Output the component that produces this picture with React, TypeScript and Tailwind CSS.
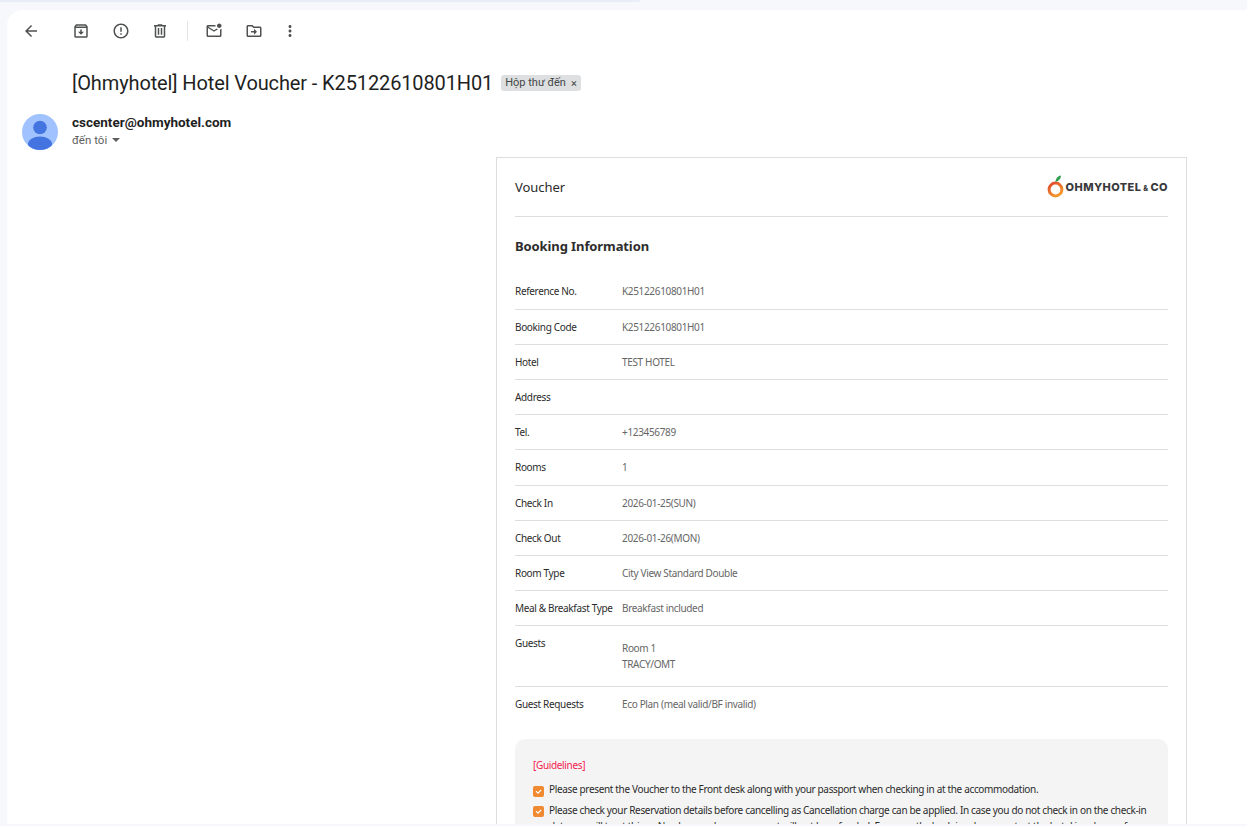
import React from "react";

const ui = "font-['Roboto','Liberation_Sans',sans-serif]";
const body = "font-['Noto_Sans','Open_Sans',sans-serif]";

function Ico({ d, x = 0, s = 18 }: { d: string; x?: number; s?: number }) {
  return (
    <svg width={s} height={s} viewBox="0 0 24 24" fill="#4f5250" className="block" style={x ? { marginLeft: x } : undefined}>
      <path d={d} />
    </svg>
  );
}

const rows: [string, string, string][] = [
  ["Reference No.", "K25122610801H01", "h-[36px]"],
  ["Booking Code", "K25122610801H01", "h-[35px]"],
  ["Hotel", "TEST HOTEL", "h-[35px]"],
  ["Address", "", "h-[35px]"],
  ["Tel.", "+123456789", "h-[35px]"],
  ["Rooms", "1", "h-[36px]"],
  ["Check In", "2026-01-25(SUN)", "h-[35px]"],
  ["Check Out", "2026-01-26(MON)", "h-[35px]"],
  ["Room Type", "City View Standard Double", "h-[35px]"],
  ["Meal & Breakfast Type", "Breakfast included", "h-[35px]"],
];

function Check({ first }: { first?: boolean }) {
  return (
    <span className={`${first ? "mt-[5px]" : "mt-[4px]"} mr-[5px] flex h-[11px] w-[11px] shrink-0 items-center justify-center rounded-[2px] bg-[#f0892f]`}>
      <svg width="9" height="9" viewBox="0 0 10 10" fill="none" stroke="#fff" strokeWidth="1.3">
        <path d="M2.2 4.6 4.4 6.8 7.900 3.300" />
      </svg>
    </span>
  );
}

export default function App() {
  return (
    <div className="flex h-[826px] w-[1247px] flex-col overflow-hidden bg-[#f6f8fc]">
      <div className="h-[10px] shrink-0">
        <div className="h-[2px] w-[640px] rounded-br-[4px] bg-[#e9eef6]" />
      </div>
      <main className="ml-[7px] h-[814px] shrink-0 overflow-hidden rounded-tl-2xl bg-white">
        <div className="flex h-[42px] items-center pl-[15px]">
          <Ico d="M20 11H7.83l5.59-5.59L12 4l-8 8 8 8 1.41-1.41L7.83 13H20v-2z" />
          <Ico x={32} d="M20.54 5.23 19.15 3.55C18.88 3.21 18.47 3 18 3H6c-.47 0-.88.21-1.16.55L3.46 5.23C3.17 5.57 3 6.02 3 6.5V19c0 1.1.9 2 2 2h14c1.1 0 2-.9 2-2V6.5c0-.48-.17-.93-.46-1.27zM6.24 5h11.52l.83 1H5.42l.82-1zM5 19V8h14v11H5zm8-9h-2v3H8l4 4 4-4h-3v-3z" />
          <Ico x={22} d="M12 2C6.48 2 2 6.48 2 12s4.48 10 10 10 10-4.48 10-10S17.52 2 12 2zm0 18c-4.41 0-8-3.59-8-8s3.59-8 8-8 8 3.59 8 8-3.59 8-8 8zm-1-5h2v2h-2v-2zm0-8h2v6h-2V7z" />
          <Ico x={21} d="M15 4V3H9v1H4v2h1v13c0 1.1.9 2 2 2h10c1.1 0 2-.9 2-2V6h1V4h-5zm2 15H7V6h10v13zM9 8h2v9H9V8zm4 0h2v9h-2V8z" />
          <div className="ml-[18px] h-[20px] w-px bg-[#e3e5e8]" />
          <Ico x={17} d="M22 8.98V18c0 1.1-.9 2-2 2H4c-1.1 0-2-.9-2-2V6c0-1.1.9-2 2-2h10.1c-.06.32-.1.66-.1 1s.04.68.1 1H4l8 5 3.67-2.29c.47.43 1.02.76 1.63.98L12 13 4 8v10h16V9.9c.74-.15 1.42-.48 2-.92zM16 5c0 1.66 1.34 3 3 3s3-1.34 3-3-1.34-3-3-3-3 1.34-3 3z" />
          <Ico x={22} d="M20 6h-8l-2-2H4c-1.1 0-2 .9-2 2v12c0 1.1.9 2 2 2h16c1.1 0 2-.9 2-2V8c0-1.1-.9-2-2-2zm0 12H4V6h5.17l2 2H20v10zm-8-9v3H8v2h4v3l4-4z" />
          <Ico x={18} d="M12 8c1.1 0 2-.9 2-2s-.9-2-2-2-2 .9-2 2 .9 2 2 2zm0 2c-1.1 0-2 .9-2 2s.9 2 2 2 2-.9 2-2-.9-2-2-2zm0 6c-1.1 0-2 .9-2 2s.9 2 2 2 2-.9 2-2-.9-2-2-2z" />
        </div>

        <div className={`mt-[16px] flex h-[30px] items-center pl-[65px] ${ui}`}>
          <h1 className="text-[20px] leading-[30px] font-normal tracking-[-0.12px] whitespace-nowrap text-[#1f1f1f]">[Ohmyhotel] Hotel Voucher - K25122610801H01</h1>
          <span className="ml-[8px] flex h-[16px] items-center rounded-[3px] bg-[#dddfe1] pr-[4px] pl-[4px] text-[11px] text-[#444746]">
            Hộp thư đến
            <span className="ml-[5px] text-[11px] leading-none">×</span>
          </span>
        </div>

        <div className={`mt-[16px] flex pl-[15px] ${ui}`}>
          <svg width="36" height="36" viewBox="0 0 36 36" className="shrink-0">
            <defs>
              <clipPath id="av"><circle cx="18" cy="18" r="18" /></clipPath>
            </defs>
            <circle cx="18" cy="18" r="18" fill="#a0c3ff" />
            <g clipPath="url(#av)" fill="#4374e0">
              <circle cx="18" cy="13.5" r="6.8" />
              <ellipse cx="18" cy="30" rx="12" ry="7.5" />
            </g>
          </svg>
          <div className="ml-[14px]">
            <div className="text-[13.5px] leading-[16px] font-bold text-[#1f1f1f]">cscenter@ohmyhotel.com</div>
            <div className="mt-[2px] flex items-center text-[11.5px] leading-[16px] text-[#5e5e5e]">
              đến tôi
              <svg width="8" height="4" viewBox="0 0 8 4" className="ml-[5px]"><path d="M0 0h8L4 4z" fill="#5e5e5e" /></svg>
            </div>
          </div>
        </div>

        <section className={`mt-[7px] ml-[489px] w-[691px] border border-[#dddddd] px-[18px] ${body} text-[10px] tracking-[-0.34px] text-[#2b2b2b]`}>
          <div className="flex h-[59px] items-center justify-between border-b border-[#dddddd]">
            <span className="mt-[2px] text-[13px] tracking-[-0.05px]">Voucher</span>
            <div className="flex items-center">
              <svg width="17" height="24" viewBox="0 0 17 24" className="mb-[3px]">
                <defs>
                  <linearGradient id="og" x1="0" y1="0" x2="0.6" y2="1">
                    <stop offset="0" stopColor="#e0452c" />
                    <stop offset="1" stopColor="#f39a2d" />
                  </linearGradient>
                </defs>
                <circle cx="8.5" cy="15.5" r="6.4" fill="none" stroke="url(#og)" strokeWidth="3" />
                <path d="M8.5 8C8.5 5 10.5 2 14 1.500c0 3-2 5.500-5.500 6.500z" fill="#2f9e4f" />
              </svg>
              <span className="ml-[2px] font-['Inter',sans-serif] text-[11px] leading-none font-extrabold tracking-[0.4px] whitespace-nowrap text-[#3a3a3c]">
                OHMYHOTEL<span className="mx-[2px] text-[7px]">&amp;</span>CO
              </span>
            </div>
          </div>

          <h2 className="mt-[19px] text-[13px] leading-[20px] font-bold tracking-[-0.1px] text-[#2d2d2d]">Booking Information</h2>

          <div className="mt-[18px]">
            {rows.map(([k, v, h]) => (
              <div key={k} className={`flex items-center border-b border-[#dddddd] ${h}`}>
                <span className="w-[107px] shrink-0 whitespace-nowrap">{k}</span>
                <span className="text-[#666666]">{v}</span>
              </div>
            ))}
            <div className="flex h-[61px] border-b border-[#dddddd] pt-[9px]">
              <span className="w-[107px] shrink-0 leading-[16px]">Guests</span>
              <div className="pt-[5px] leading-[16px] text-[#666666]">
                <div>Room 1</div>
                <div>TRACY/OMT</div>
              </div>
            </div>
            <div className="flex h-[35px] items-center">
              <span className="w-[107px] shrink-0">Guest Requests</span>
              <span className="text-[#666666]">Eco Plan (meal valid/BF invalid)</span>
            </div>
          </div>

          <div className="mt-[17px] rounded-t-[10px] bg-[#f4f4f4] px-[18px] pt-[18px] pb-[20px]">
            <div className="leading-[16px] text-[#f5204f]">[Guidelines]</div>
            <ul className="mt-[8px]">
              <li className="flex leading-[16px]">
                <Check first />
                <span>Please present the Voucher to the Front desk along with your passport when checking in at the accommodation.</span>
              </li>
              <li className="mt-[5px] flex leading-[16px]">
                <Check />
                <span>Please check your Reservation details before cancelling as Cancellation charge can be applied. In case you do not check in on the check-in date, we will treat this as No-show and your payment will not be refunded. For smooth check-in, please contact the hotel in advance for</span>
              </li>
            </ul>
          </div>
        </section>
      </main>
    </div>
  );
}
